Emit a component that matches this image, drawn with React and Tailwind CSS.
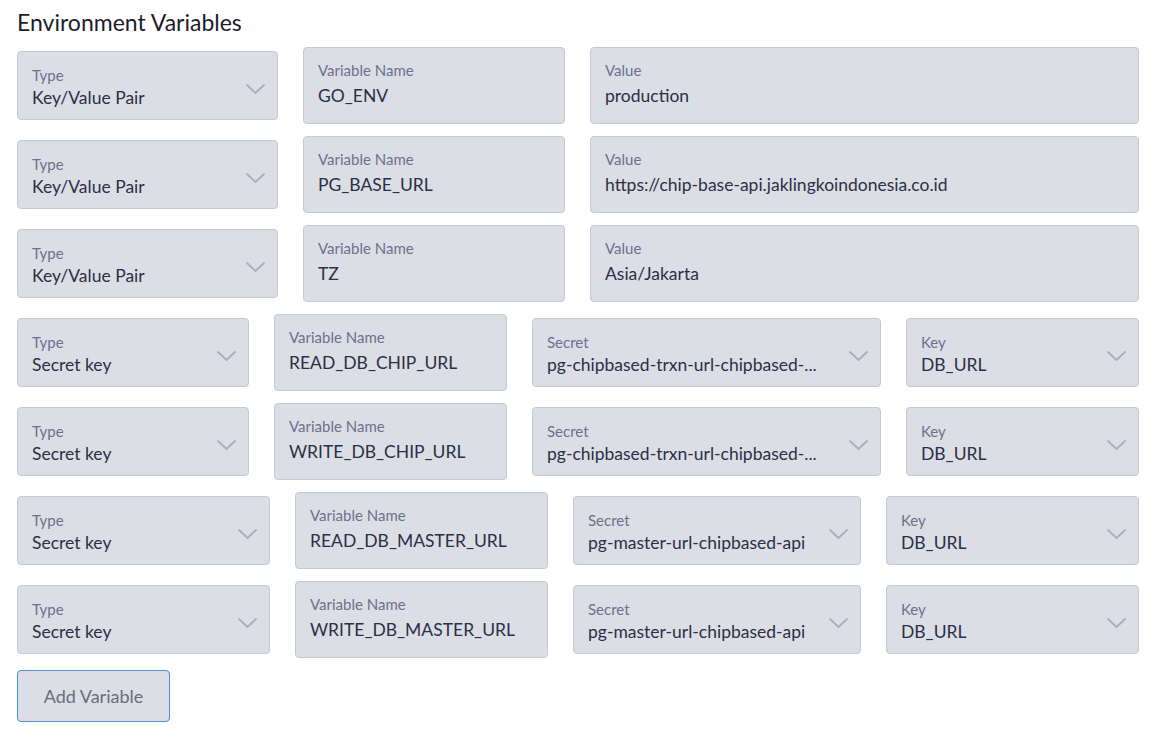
import React from "react";

const Chevron = () => (
  <svg width="19" height="10" viewBox="0 0 19 10" fill="none" className="shrink-0 mt-[6px]">
    <path d="M1 1l8.5 8L18 1" stroke="#abadbd" strokeWidth="1.8" strokeLinecap="round" strokeLinejoin="round" />
  </svg>
);

const Select = ({ label, value, width }) => (
  <div className={`${width} h-[69px] flex items-center bg-[#dcdee6] border border-[#c6c8d5] rounded-[4px] pl-[14px] pr-[12px]`}>
    <div className="flex-1 min-w-0 flex flex-col pt-[13px] self-start">
      <span className="text-[15px] leading-[21px] text-[#6d708c]">{label}</span>
      <span className="text-[17.5px] leading-[24px] text-[#2c2f45] truncate">{value}</span>
    </div>
    <Chevron />
  </div>
);

const Field = ({ label, value, width }) => (
  <div className={`${width} h-[77px] flex flex-col bg-[#dcdee6] border border-[#c6c8d5] rounded-[4px] px-[14px] pt-[12px]`}>
    <span className="text-[15px] leading-[20px] text-[#6d708c]">{label}</span>
    <span className="text-[17.5px] leading-[24px] mt-[4px] text-[#2c2f45] truncate">{value}</span>
  </div>
);

const kvRows = [
  { name: "GO_ENV", value: "production" },
  { name: "PG_BASE_URL", value: "https://chip-base-api.jaklingkoindonesia.co.id" },
  { name: "TZ", value: "Asia/Jakarta" },
];

const secretRows = [
  { name: "READ_DB_CHIP_URL", secret: "pg-chipbased-trxn-url-chipbased-...", key: "DB_URL", w: ["w-[232px]", "w-[233px]", "w-[349px]", "w-[233px]"] },
  { name: "WRITE_DB_CHIP_URL", secret: "pg-chipbased-trxn-url-chipbased-...", key: "DB_URL", w: ["w-[232px]", "w-[233px]", "w-[349px]", "w-[233px]"] },
  { name: "READ_DB_MASTER_URL", secret: "pg-master-url-chipbased-api", key: "DB_URL", w: ["w-[253px]", "w-[253px]", "w-[288px]", "w-[253px]"] },
  { name: "WRITE_DB_MASTER_URL", secret: "pg-master-url-chipbased-api", key: "DB_URL", w: ["w-[253px]", "w-[253px]", "w-[288px]", "w-[253px]"] },
];

export default function App() {
  return (
    <div className="min-h-screen bg-white font-['Lato','Liberation_Sans',sans-serif]">
      <div className="w-[1122px] ml-[17px] pt-[8px]">
        <h2 className="text-[23px] leading-[28px] text-[#1b1d2e] font-normal">Environment Variables</h2>
        <div className="flex flex-col gap-[12px] mt-[11px]">
          {kvRows.map((r) => (
            <div key={r.name} className="flex items-center gap-[25px] h-[77px]">
              <Select label="Type" value="Key/Value Pair" width="w-[261px]" />
              <Field label="Variable Name" value={r.name} width="w-[262px]" />
              <Field label="Value" value={r.value} width="flex-1" />
            </div>
          ))}
          {secretRows.map((r) => (
            <div key={r.name} className="flex items-center gap-[25px] h-[77px]">
              <Select label="Type" value="Secret key" width={r.w[0]} />
              <Field label="Variable Name" value={r.name} width={r.w[1]} />
              <Select label="Secret" value={r.secret} width={r.w[2]} />
              <Select label="Key" value={r.key} width={r.w[3]} />
            </div>
          ))}
          <div>
            <button className="w-[153px] h-[52px] bg-[#dcdee6] border border-[#4a92d2] rounded-[4px] text-[18px] text-[#6b6c7c]">
              Add Variable
            </button>
          </div>
        </div>
      </div>
    </div>
  );
}
